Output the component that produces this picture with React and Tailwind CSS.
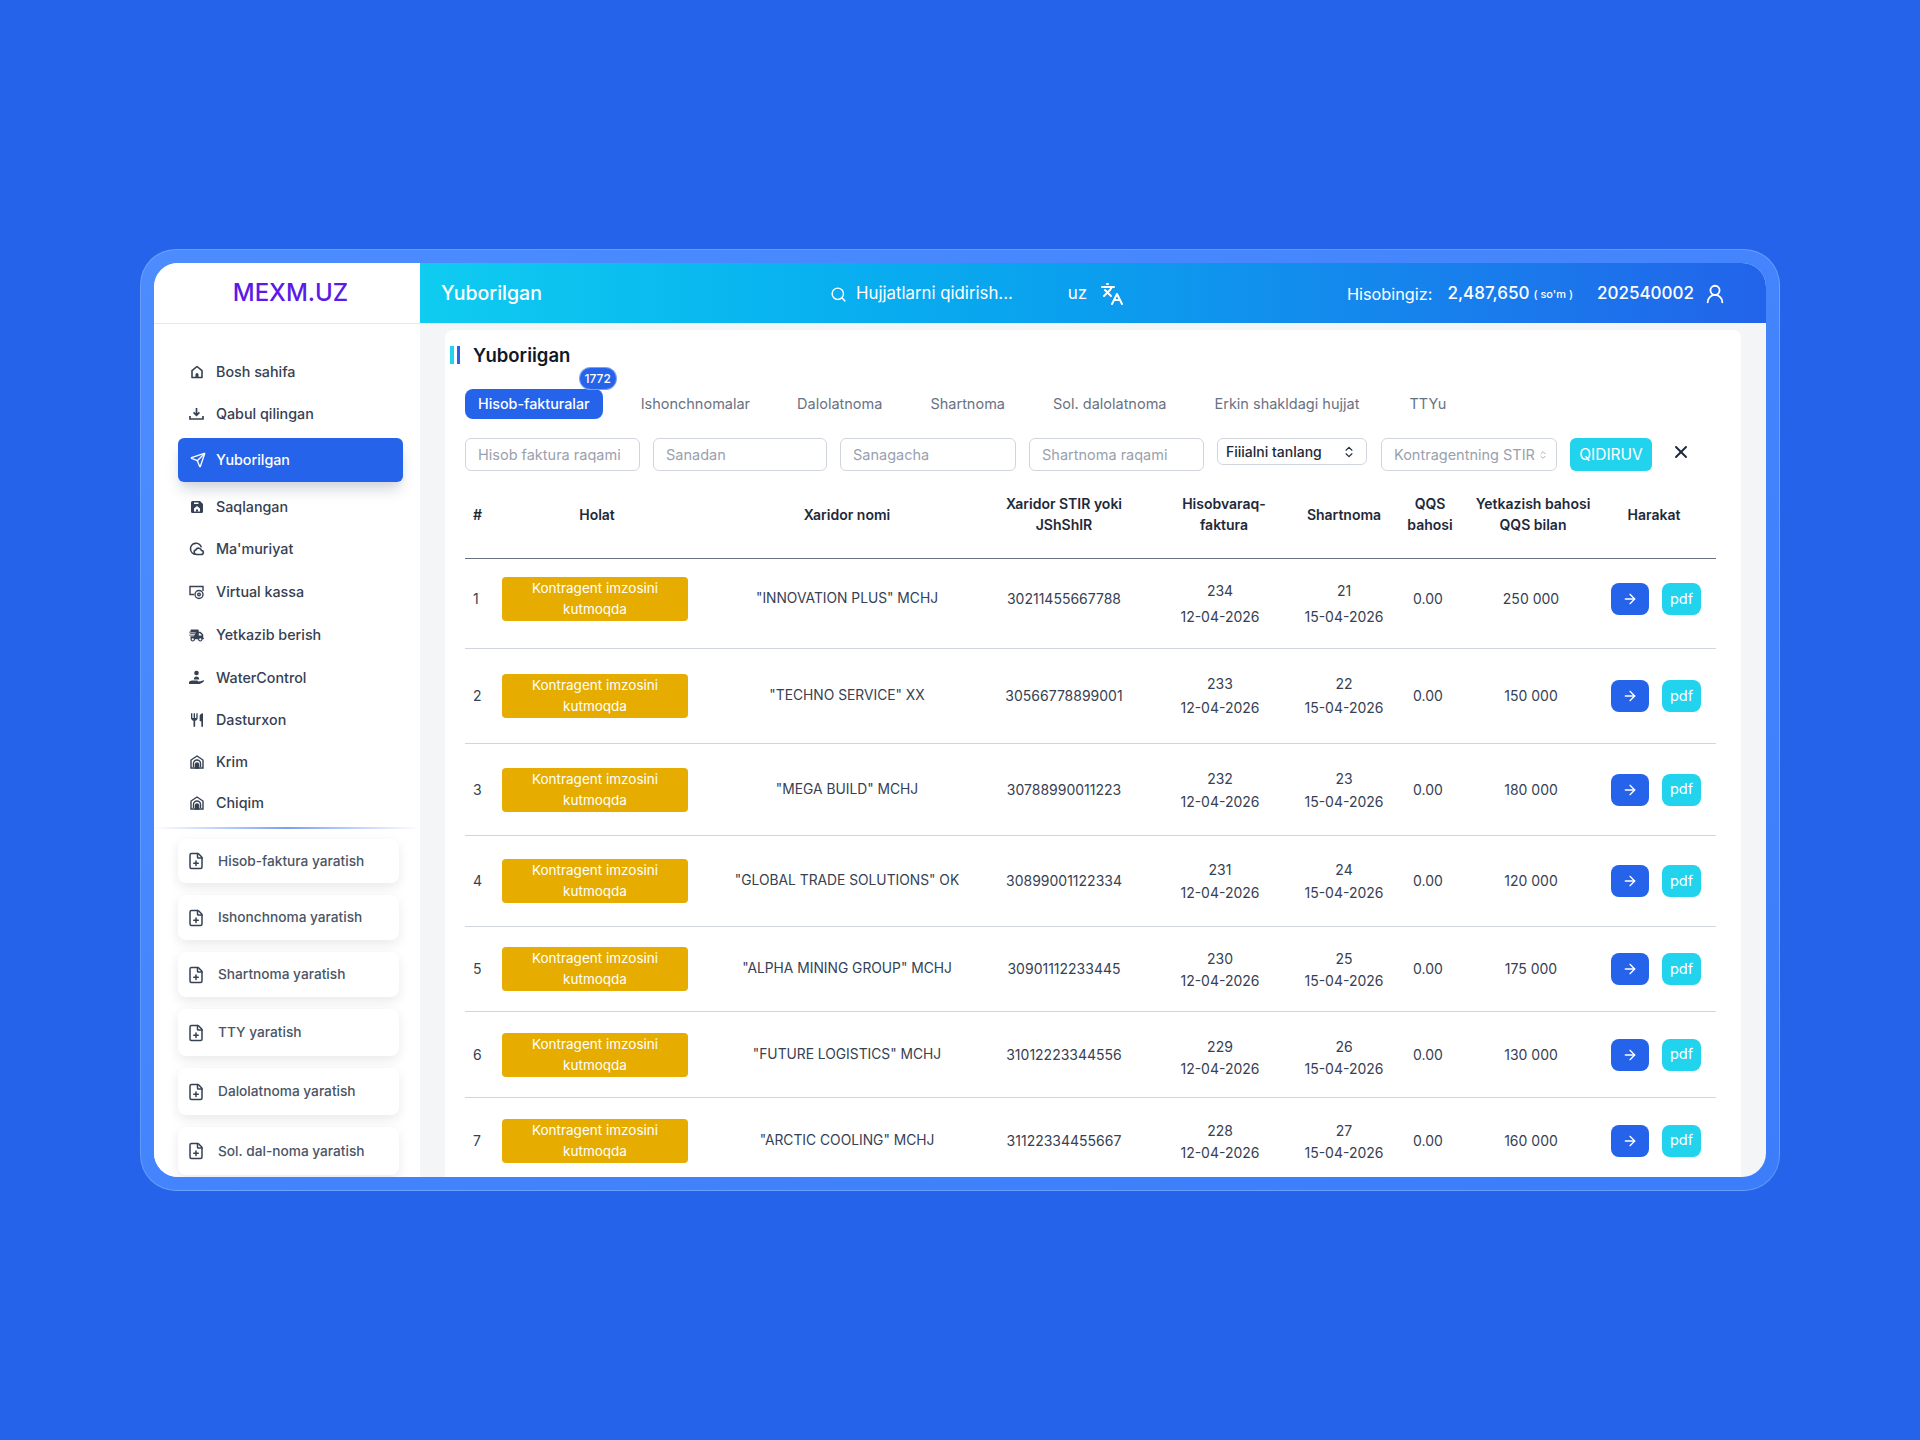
import React from 'react';
import { ArrowRight, ChevronsUpDown, FilePlus, Languages, Search, Send, UserRound, X } from 'lucide-react';
import { FaTruckFast } from 'react-icons/fa6';
import { MdRestaurant } from 'react-icons/md';

const HomeIcon = () => (
  <svg width="16" height="16" viewBox="0 0 16 16" fill="none" stroke="currentColor" strokeWidth="1.6">
    <path d="M3 13.5V6.7L8 2.5l5 4.2v6.8z" strokeLinejoin="round" />
    <path d="M6.5 13v-2.5a1.5 1.5 0 0 1 3 0V13z" fill="currentColor" stroke="none" />
  </svg>
);

const InboxIcon = () => (
  <svg width="17" height="16" viewBox="0 0 17 16" fill="none" stroke="currentColor" strokeWidth="1.7">
    <path d="M8.5 2v7M5.6 6.4l2.9 2.9 2.9-2.9" />
    <path d="M2 10v3h13v-3" />
  </svg>
);

const SaveIcon = () => (
  <svg width="16" height="16" viewBox="0 0 16 16">
    <path d="M2 3.500A1.500 1.500 0 0 1 3.500 2H11l3 3v7.500a1.500 1.500 0 0 1-1.500 1.500h-9A1.500 1.500 0 0 1 2 12.500z" fill="currentColor" />
    <path d="M5 3.500h4.500v1.500H5zM8 7l3 2.500V12.500H5V9.500z" fill="#fff" />
    <path d="M7 10.500h2v2H7z" fill="currentColor" />
  </svg>
);

const CloudIcon = () => (
  <svg width="17" height="16" viewBox="0 0 17 16" fill="none" stroke="currentColor" strokeWidth="1.600">
    <path d="M8 13.300a5.500 5.500 0 1 1 5.300-6.900" />
    <path d="M8.500 13.500h4.700a2 2 0 0 0 .3-4 3 3 0 0 0-5.600-.7 2.400 2.400 0 0 0 .6 4.700z" fill="#fff" />
  </svg>
);

const KassaIcon = () => (
  <svg width="17" height="16" viewBox="0 0 17 16" fill="none" stroke="currentColor" strokeWidth="1.400">
    <path d="M6 10.500H2V2.500h13V7" />
    <circle cx="11" cy="10.500" r="4" fill="#fff" />
    <circle cx="11" cy="10.500" r="1.300" />
  </svg>
);

const WaterIcon = () => (
  <svg width="17" height="16" viewBox="0 0 17 16" fill="currentColor">
    <circle cx="8.500" cy="3" r="2.300" />
    <path d="M5.800 9.500c0-2 1.200-3 2.700-3s2.700 1 2.700 3z" />
    <path d="M1 11.800c1.200-.8 2.500-1.300 4-1.300h4.200c1 0 1 1.300 0 1.300H7.500l5-.5 3-1c.6 0 .7.700.2 1.100-1.500 1.300-3.400 2.600-5.700 2.600H1z" />
  </svg>
);

const StoreIcon = () => (
  <svg width="16" height="16" viewBox="0 0 16 16" fill="none" stroke="currentColor" strokeWidth="1.400">
    <path d="M2 14V6l6-4 6 4v8z" />
    <path d="M4.500 13V9.500a3.500 3.500 0 0 1 7 0V13" />
    <path d="M6.500 14v-3.500a1.500 1.500 0 0 1 3 0V14z" fill="currentColor" />
  </svg>
);

const navItems = [
  { label: 'Bosh sahifa', icon: <HomeIcon />, cls: 'h-[42px] mt-[27px]' },
  { label: 'Qabul qilingan', icon: <InboxIcon />, cls: 'h-[42px]' },
  { label: 'Yuborilgan', icon: <Send size={16} />, cls: 'h-[44px] mt-[3px]', active: true },
  { label: 'Saqlangan', icon: <SaveIcon />, cls: 'h-[42px] mt-[4px]' },
  { label: "Ma'muriyat", icon: <CloudIcon />, cls: 'h-[42px]' },
  { label: 'Virtual kassa', icon: <KassaIcon />, cls: 'h-[44px]' },
  { label: 'Yetkazib berish', icon: <FaTruckFast size={15} />, cls: 'h-[42px]' },
  { label: 'WaterControl', icon: <WaterIcon />, cls: 'h-[44px]' },
  { label: 'Dasturxon', icon: <MdRestaurant size={16} />, cls: 'h-[40px]' },
  { label: 'Krim', icon: <StoreIcon />, cls: 'h-[44px]' },
  { label: 'Chiqim', icon: <StoreIcon />, cls: 'h-[38px]' },
];

const createItems = [
  { label: 'Hisob-faktura yaratish', cls: 'h-[44px]' },
  { label: 'Ishonchnoma yaratish', cls: 'h-[45px]' },
  { label: 'Shartnoma yaratish', cls: 'h-[45px]' },
  { label: 'TTY yaratish', cls: 'h-[47px]' },
  { label: 'Dalolatnoma yaratish', cls: 'h-[47px]' },
  { label: 'Sol. dal-noma yaratish', cls: 'h-[48px]' },
];

const tabs = [
  { label: 'Ishonchnomalar', cls: 'pl-6 pr-[23px]' },
  { label: 'Dalolatnoma', cls: 'px-6' },
  { label: 'Shartnoma', cls: 'px-6' },
  { label: 'Sol. dalolatnoma', cls: 'px-6' },
  { label: 'Erkin shakldagi hujjat', cls: 'pl-6 pr-[26px]' },
  { label: 'TTYu', cls: 'px-6' },
];

const rows = [
  { name: '"INNOVATION PLUS" MCHJ', stir: '30211455667788', inv: '234', con: '21', sum: '250 000', cls: 'h-[90px] pb-[9px]', date: 'leading-[26px] mt-[10px]' },
  { name: '"TECHNO SERVICE" XX', stir: '30566778899001', inv: '233', con: '22', sum: '150 000', cls: 'h-[95px]', date: 'leading-[24px]' },
  { name: '"MEGA BUILD" MCHJ', stir: '30788990011223', inv: '232', con: '23', sum: '180 000', cls: 'h-[92px]', date: 'leading-[23px]' },
  { name: '"GLOBAL TRADE SOLUTIONS" OK', stir: '30899001122334', inv: '231', con: '24', sum: '120 000', cls: 'h-[91px]', date: 'leading-[23px]' },
  { name: '"ALPHA MINING GROUP" MCHJ', stir: '30901112233445', inv: '230', con: '25', sum: '175 000', cls: 'h-[85px]', date: 'leading-[22px] mt-[2px]' },
  { name: '"FUTURE LOGISTICS" MCHJ', stir: '31012223344556', inv: '229', con: '26', sum: '130 000', cls: 'h-[86px]', date: 'leading-[22px] mt-[7px]' },
  { name: '"ARCTIC COOLING" MCHJ', stir: '31122334455667', inv: '228', con: '27', sum: '160 000', cls: 'h-[86px]', date: 'leading-[22px] mt-[2px]' },
];

const gridCols = 'grid grid-cols-[32px_200px_300px_134px_166px_94px_78px_128px_120px] items-center';
const inputCls = 'h-[33px] rounded-md border-[1.5px] border-gray-300 bg-white px-3 text-[14.5px] text-gray-700 placeholder:text-gray-400 outline-none';

const App = () => {
  return (
    <div className="h-screen flex items-center justify-center bg-[#2563eb] font-['Inter',sans-serif]">
      <div className="w-[1640px] h-[942px] p-[13px] rounded-[36px] border border-white/20 bg-linear-to-br from-[#4c8cff] to-[#3b7dfa]">
        <div className="flex h-full rounded-[24px] overflow-hidden bg-[#f4f5f6]">
          {/* Sidebar */}
          <aside className="w-[266px] shrink-0 bg-white flex flex-col overflow-hidden">
            <div className="h-[61px] shrink-0 flex items-center justify-center pl-[7px] border-b border-gray-200">
              <span className="text-2xl font-medium text-[#5a1ae8]">MEXM.UZ</span>
            </div>
            <nav className="flex flex-col">
              {navItems.map((item) => (
                <div key={item.label} className={`${item.cls} shrink-0 ${item.active ? 'ml-6 mr-[17px] pl-[11px] rounded-md bg-[#2563eb] text-white shadow-lg shadow-gray-300' : 'ml-6 pl-[10px] text-gray-700'} flex items-center text-[14.3px] font-medium`}>
                  <span className="w-[17px] flex justify-center">{item.icon}</span>
                  <span className={item.active ? 'ml-[10px]' : 'ml-[11px]'}>{item.label}</span>
                </div>
              ))}
            </nav>
            <div className="h-[2px] mt-[5px] shrink-0 bg-linear-to-r from-white via-[#7d9ff0] to-white" />
            <div className="flex flex-col gap-3 pt-[10px] pl-6 pr-[21px]">
              {createItems.map((item) => (
                <div key={item.label} className={`${item.cls} shrink-0 flex items-center gap-[13px] pl-[9px] rounded-lg bg-white text-[13.7px] font-medium text-gray-600 shadow-[0_4px_12px_rgba(0,0,0,0.09)]`}>
                  <FilePlus size={18} className="text-gray-700" />
                  <span>{item.label}</span>
                </div>
              ))}
            </div>
          </aside>

          <div className="flex-1 min-w-0 flex flex-col">
            {/* Top bar */}
            <header className="h-[60px] shrink-0 flex items-center pl-[21px] pr-[40px] pt-[2px] text-white bg-linear-to-r from-[#10ccf0] via-[#0b9eee] to-[#2263ea]">
              <span className="w-[389px] text-[19.5px] font-medium">Yuborilgan</span>
              <Search size={17} />
              <span className="ml-[9px] text-[16.8px]">Hujjatlarni qidirish...</span>
              <span className="ml-[55px] text-[17px]">uz</span>
              <Languages size={24} className="ml-[13px]" />
              <span className="ml-auto text-[16.3px]">Hisobingiz:</span>
              <span className="ml-[15px] text-[17px] font-medium">2,487,650</span>
              <span className="ml-[4px] text-[11px] font-medium">( so'm )</span>
              <span className="ml-[24px] text-[17px] font-medium">202540002</span>
              <UserRound size={22} className="ml-[10px]" />
            </header>

            {/* Content */}
            <main className="flex-1 min-h-0 mx-[25px] mt-[7px] rounded-t-lg bg-white pl-5 pr-[25px] pt-[16px] overflow-hidden">
              <div className="flex items-center h-[18px] -ml-[15px] gap-[3px]">
                <span className="w-[4px] h-[18px] bg-[#22d3ee]" />
                <span className="w-[3px] h-[18px] bg-[#2563eb]" />
                <h1 className="ml-[10px] mt-[2px] text-[18.5px] font-semibold text-gray-900">Yuboriigan</h1>
              </div>

              <div className="flex items-center h-[30px] mt-[25px] text-[14.5px] text-gray-500">
                <div className="relative mr-[14px] h-[30px] px-[13px] flex items-center rounded-lg bg-[#2563eb] text-white text-[14.3px] font-medium">
                  Hisob-fakturalar
                  <span className="absolute -top-[22px] -right-[14px] w-[38px] h-[23px] flex items-center justify-center rounded-full border border-white/40 bg-[#2563eb] text-xs font-medium">1772</span>
                </div>
                {tabs.map((tab) => (
                  <span key={tab.label} className={tab.cls}>{tab.label}</span>
                ))}
              </div>

              <div className="flex items-start h-[33px] mt-[19px]">
                <input className={`${inputCls} w-[175px]`} placeholder="Hisob faktura raqami" />
                <input className={`${inputCls} w-[174px] ml-[13px]`} placeholder="Sanadan" />
                <input className={`${inputCls} w-[176px] ml-[13px]`} placeholder="Sanagacha" />
                <input className={`${inputCls} w-[175px] ml-[13px]`} placeholder="Shartnoma raqami" />
                <div className="w-[150px] h-[27px] ml-[13px] flex items-center justify-between pl-2 pr-[10px] rounded-md border-[1.5px] border-gray-300 text-sm font-medium text-gray-800">
                  Fiiialni tanlang
                  <ChevronsUpDown size={14} />
                </div>
                <div className="w-[176px] h-[33px] ml-[14px] flex items-center rounded-md border-[1.5px] border-gray-300 pl-3 pr-2">
                  <input className="w-full min-w-0 text-[14.5px] text-gray-700 placeholder:text-gray-400 outline-none" placeholder="Kontragentning STIR" />
                  <ChevronsUpDown size={10} className="shrink-0 text-gray-400" />
                </div>
                <button className="w-[82px] h-[33px] ml-[13px] rounded-md bg-[#22d3ee] text-[15.5px] text-white">QIDIRUV</button>
                <X size={20} strokeWidth={2.25} className="ml-[19px] mt-[4px] text-gray-800" />
              </div>

              {/* Table */}
              <div className={`${gridCols} h-[89px] -mt-px border-b-[1.5px] border-gray-500 text-sm leading-[21px] font-semibold text-gray-800 text-center`}>
                <span className="pl-2 text-left">#</span>
                <span>Holat</span>
                <span>Xaridor nomi</span>
                <span>Xaridor STIR yoki JShShIR</span>
                <span className="pl-5">Hisobvaraq-<br />faktura</span>
                <span>Shartnoma</span>
                <span>QQS bahosi</span>
                <span>Yetkazish bahosi QQS bilan</span>
                <span className="pr-[6px]">Harakat</span>
              </div>
              {rows.map((row, i) => (
                <div key={row.stir} className={`${gridCols} ${row.cls} border-b-[1.5px] border-gray-300 text-sm text-gray-700 text-center`}>
                  <span className="pl-2 text-left">{i + 1}</span>
                  <span className="w-[186px] h-[44px] ml-[5px] flex items-center rounded bg-[#e6ad00] text-white text-[13.5px] leading-[21px]">Kontragent imzosini kutmoqda</span>
                  <span className="text-[13.8px]">{row.name}</span>
                  <span>{row.stir}</span>
                  <span className={`pl-3 ${row.date}`}>{row.inv}<br />12-04-2026</span>
                  <span className={row.date}>{row.con}<br />15-04-2026</span>
                  <span className="pr-1">0.00</span>
                  <span className="pr-1">{row.sum}</span>
                  <span className="flex justify-center gap-[13px] pr-[2px]">
                    <span className="w-[38px] h-[32px] flex items-center justify-center rounded-lg bg-[#2563eb] text-white">
                      <ArrowRight size={16} />
                    </span>
                    <span className="w-[39px] h-[32px] flex items-center justify-center rounded-lg bg-[#22d3ee] text-[14.5px] text-white">pdf</span>
                  </span>
                </div>
              ))}
            </main>
          </div>
        </div>
      </div>
    </div>
  );
};

export default App;
